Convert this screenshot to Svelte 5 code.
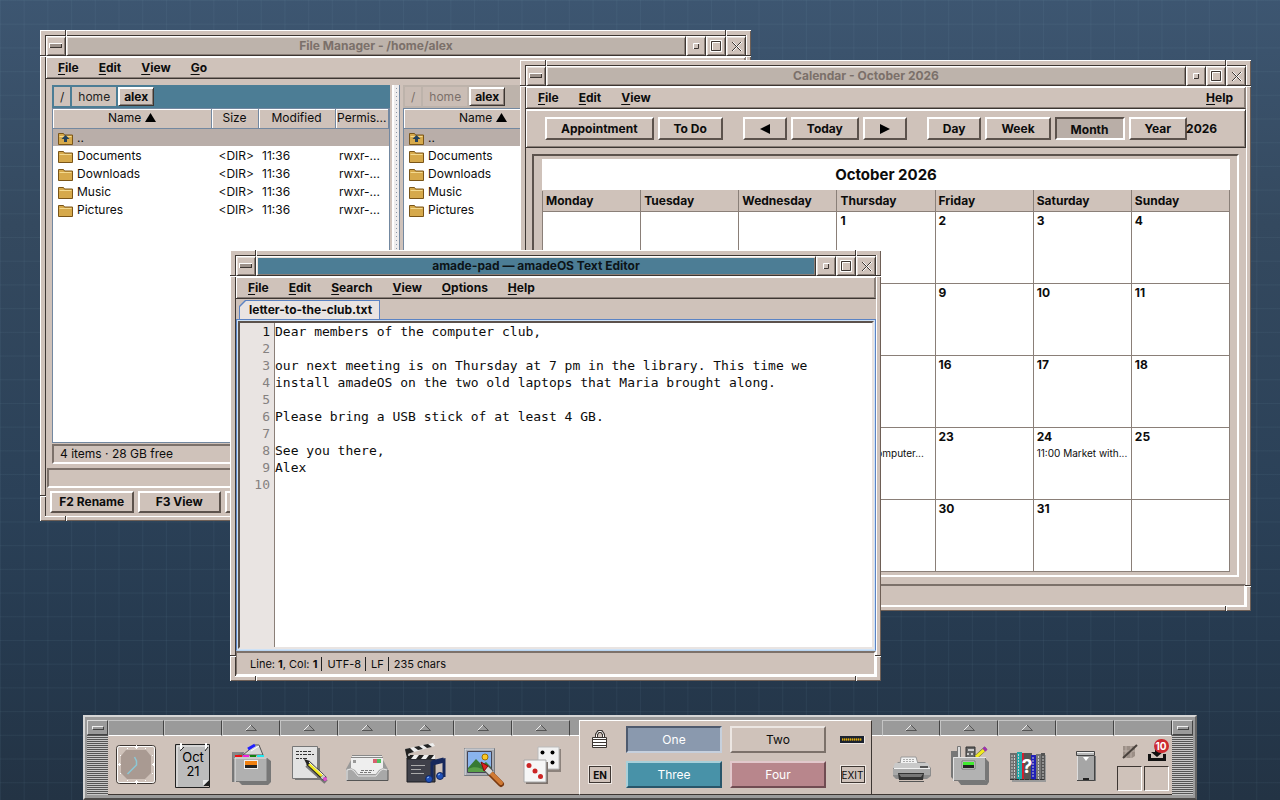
<script>
    const folders = ["Documents", "Downloads", "Music", "Pictures"];
    const fileKeys = ["F2 Rename", "F3 View", "F4 Edit", "F5 Copy", "F6 Move", "F7 Mkdir", "F8 Delete", "F9 Menu"];
    const weekdays = ["Monday", "Tuesday", "Wednesday", "Thursday", "Friday", "Saturday", "Sunday"];
    const events = {
        22: "19:00 Computer...",
        24: "11:00 Market with..."
    };
    const letter = [
        "Dear members of the computer club,",
        "",
        "our next meeting is on Thursday at 7 pm in the library. This time we",
        "install amadeOS on the two old laptops that Maria brought along.",
        "",
        "Please bring a USB stick of at least 4 GB.",
        "",
        "See you there,",
        "Alex",
        ""
    ];
    const leftApps = [
        { name: "clock", menu: false },
        { name: "date", menu: false },
        { name: "files", menu: true },
        { name: "notes", menu: true },
        { name: "mail", menu: true },
        { name: "media", menu: true },
        { name: "paint", menu: true },
        { name: "games", menu: true }
    ];
    const rightApps = [
        { name: "printer", menu: true },
        { name: "tools", menu: true },
        { name: "help", menu: true },
        { name: "trash", menu: false }
    ];

    // October 2026 starts on a Thursday
    const weeks = [0, 1, 2, 3, 4].map((w) =>
        weekdays.map((_, d) => {
            const day = w * 7 + d - 2;
            return day > 0 && day <= 31 ? day : null;
        })
    );

    let workspace = $state("One");
    let calendarView = $state("Month");
</script>

{#snippet titleBar(title)}
    <header class="titlebar">
        <button class="tb" aria-label="Window menu">
            <svg width="16" height="16"><path d="M1 5h13v5H1z" fill="#fff"/><path d="M2 6h12v4H2z" fill="#3d3632"/><path d="M2 6h11v3H2z" fill="#9c918a"/></svg>
        </button>
        <h2>{title}</h2>
        <button class="tb" aria-label="Minimize">
            <svg width="16" height="16"><path d="M5.500 11V5.500h6" fill="none" stroke="#fff"/><path d="M6 10.500h4.500V6" fill="none" stroke="#3d3632"/></svg>
        </button>
        <button class="tb" aria-label="Maximize">
            <svg width="16" height="16" fill="none"><path d="M2.500 13.500V2.500H13.500V13.500z" stroke="#fff"/><path d="M3.500 12.500V3.500H12.500V12.500z" stroke="#3d3632"/><path d="M4.500 12V4.500H12" stroke="#fff"/></svg>
        </button>
        <button class="tb" aria-label="Close">
            <svg width="16" height="16" stroke="#3d3632"><path d="M5 4l9 9M14 4l-9 9" stroke="#fff"/><path d="M4 4l9 9M13 4l-9 9"/></svg>
        </button>
    </header>
{/snippet}

{#snippet menuBar(items, last)}
    <nav class="menubar">
        {#each items as item}
            <button class:last={item === last}><u>{item[0]}</u>{item.slice(1)}</button>
        {/each}
    </nav>
{/snippet}

{#snippet folder(up)}
    <svg class="folder" width="15" height="13">
        <path d="M.5 12.500V1.500h5l1 1.500h8v9.500z" fill="#d6a94b" stroke="#7a5518"/>
        <path d="M1.500 4.500h12" stroke="#f3d98f"/>
        {#if up}<path d="M7.500 3l4 4h-2.500v3h-3V7H3.500z" fill="#23415e"/>{/if}
    </svg>
{/snippet}

{#snippet pane(active)}
    <section class="pane" class:active>
        <div class="path">
            <button>/</button>
            <button>home</button>
            <button class="here">alex</button>
        </div>
        <div class="listing">
            <table>
                <thead>
                    <tr><th class="name">Name <svg width="11" height="9"><path d="M5.500 0L11 9H0z"/></svg></th><th class="size">Size</th><th class="date">Modified</th><th>Permis...</th></tr>
                </thead>
                <tbody>
                    <tr class="selected"><td>{@render folder(true)}..</td><td></td><td></td><td></td></tr>
                    {#each folders as name}
                        <tr><td>{@render folder(false)}{name}</td><td class="dir">&lt;DIR&gt;</td><td>11:36</td><td>rwxr-...</td></tr>
                    {/each}
                </tbody>
            </table>
        </div>
        <p class="sunken">4 items · 28 GB free</p>
    </section>
{/snippet}

{#snippet icon(name)}
    <svg width="48" height="58" viewBox="0 0 48 58">
        {#if name === "clock"}
            <rect x="4.500" y="9.500" width="39" height="38" rx="3" fill="#cfc2ba" stroke="#3d3632"/>
            <rect x="5.500" y="10.500" width="37" height="36" rx="2" fill="none" stroke="#fff"/>
            <path d="M14 14h20l5 6v17l-6 6H15l-6-6V20z" fill="#a99a92"/>
            <path d="M24.500 9v4M24.500 44v4M6 28.500h3M40 28.500h3M23 11.500h3M23 45.500h3M7.500 27v3M41.500 27v3" stroke="#fff"/>
            <path d="M15 12.500h1M33 12.500h1M8 19.500h1M40 19.500h1M8 37.500h1M40 37.500h1M15 44.500h1M33 44.500h1" stroke="#fff"/>
            <path d="M22.500 21l2 4v4l-9 9" fill="none" stroke="#8bc8d6" stroke-width="1.500"/>
        {:else if name === "date"}
            <path d="M7 9h34v35l-6 7H7z" fill="#bcbcbc"/>
            <path d="M6.500 51.500V8.500H40.500V51.500z" fill="none" stroke="#222"/>
            <path d="M8 51V10h32" fill="none" stroke="#eee"/>
            <path d="M34 50l6-6v6z" fill="#222"/><path d="M34 50v-6h6z" fill="#e8e8e8"/>
            <path d="M12 7v6M37 7v6" stroke="#fff" stroke-width="2"/><path d="M11 15l4-4M36 15l3-4" stroke="#222"/>
            <text x="24" y="26">Oct</text>
            <text x="24" y="40">21</text>
        {:else if name === "files"}
            <path d="M5 16h12l-9 30H5zM12 46h28V22l4 3v21l-3 3H15z" fill="#777"/><path d="M5 16h12l-7 3v4H6z" fill="#888"/>
            <path d="M16 19L28 9h4l4 10z" fill="#d6d6d6" stroke="#555"/>
            <path d="M21 13l7-4" stroke="#2020ff" stroke-width="3"/><path d="M24 15l8-5" stroke="#fff"/>
            <path d="M8 21h32v25H8z" fill="#b0b0b0"/><path d="M8 46V22h32" fill="none" stroke="#e5e5e5"/><path d="M9 45.500h31V22" fill="none" stroke="#777"/>
            <path d="M8 20h7" stroke="#f01010" stroke-width="2"/><path d="M16 20h6" stroke="#f020e0" stroke-width="2"/>
            <path d="M23 20h6" stroke="#108010" stroke-width="2"/><path d="M30 20h7" stroke="#20e8f0" stroke-width="2"/>
            <path d="M17 24h14v9H17z" fill="#eee"/><path d="M18 25h12v4H18z" fill="#f08010"/><path d="M18 29h12v3H18z" fill="#222"/>
        {:else if name === "notes"}
            <path d="M10 12h25v32H10z" fill="#777"/><path d="M7.500 10.500h25v32h-25z" fill="#e2e2e2" stroke="#777"/>
            <path d="M11 15.500h16M11 18.500h19M11 22.500h12" stroke="#333" stroke-dasharray="3 1 2 1 4 1"/>
            <path d="M22 29l19 17" stroke="#777" stroke-width="5"/>
            <path d="M23 27l17 16" stroke="#222" stroke-width="5"/><path d="M24 28l13 12" stroke="#f2ea20" stroke-width="3"/>
            <path d="M24 26l14 13" stroke="#fff"/><path d="M19 23l6 2-3 4z" fill="#222"/><path d="M37 40l2 2" stroke="#ccc" stroke-width="4"/><circle cx="40" cy="43" r="2" fill="#e050d0"/>
        {:else if name === "mail"}
            <path d="M3 45V33l5-9h32l5 9v12z" fill="#999"/>
            <path d="M9 19h30v3H9zM8 22h32v16H8z" fill="#eee"/><path d="M9 19.500h30M8 21.500h32" stroke="#888"/>
            <path d="M10 24h3v3h-3z" fill="#999"/><path d="M30 23h4v4h-4z" fill="#d86070"/><path d="M34 23h4v4h-4z" fill="#50c060"/>
            <path d="M18 34.500h13M17 36.500h12" stroke="#777" stroke-dasharray="3 1"/>
            <path d="M3 33l5-1 4 2 4 5h16l4-5 4-2 5 1v12H3z" fill="#a8a8a8"/><path d="M4 44V34l4-1 3 2 4 5h18l4-5 3-2 4 1" fill="none" stroke="#e8e8e8"/>
            <path d="M4 44.500h41V34" fill="none" stroke="#555"/>
        {:else if name === "media"}
            <path d="M6 23h28v23H6z" fill="#3f4049" stroke="#1c1c22"/><path d="M10 29.500h14M10 33.500h10M10 37.500h13" stroke="#aaa"/>
            <path d="M5 19h29v4H5z" fill="#eee"/><path d="M8 19h5l-3 4H5zM18 19h5l-3 4h-5zM28 19h5l-3 4h-5z" fill="#222"/>
            <path d="M4 13L32 7l2 3L6 18z" fill="#eee"/><path d="M4 13l5-1 4 4-7 2zM13 11l5-1 4 3-5 1zM22 9l5-1 4 3-5 1z" fill="#222"/>
            <path d="M4 13l2 10 4-3-3-3z" fill="#222"/><circle cx="8" cy="19" r="1" fill="#ddd"/>
            <path d="M31 43V27l12-3v17" fill="none" stroke="#17285c" stroke-width="3"/><path d="M31 27l12-3" stroke="#17285c" stroke-width="5"/>
            <circle cx="28" cy="43" r="3.500" fill="#1f50b8" stroke="#17285c"/><circle cx="39" cy="40" r="3.500" fill="#1f50b8" stroke="#17285c"/><path d="M26 42l2-1M37 39l2-1" stroke="#9cc4ff"/>
        {:else if name === "paint"}
            <path d="M5.500 12.500h30v27h-30z" fill="#a8abb2" stroke="#777a80"/><path d="M6 39V13h29" fill="none" stroke="#e2e4e8"/>
            <path d="M8.500 15.500h24v21h-24z" fill="#8ab4ee" stroke="#445"/><circle cx="26" cy="21" r="3" fill="#fbc928" stroke="#a07000"/>
            <path d="M9 32l8-9 6 6 4-3 5 5v5H9z" fill="#367a34"/><path d="M9 33c6-3 13-2 18 3H9z" fill="#59a048"/>
            <path d="M31 37l11 11" stroke="#7a3a12" stroke-width="6" stroke-linecap="round"/><path d="M32 37l10 10" stroke="#d07a35" stroke-width="4" stroke-linecap="round"/>
            <path d="M27 32l5 5" stroke="#555" stroke-width="7"/><path d="M27 32l5 5" stroke="#d8d8d8" stroke-width="5"/>
            <path d="M22 26l7 4-4 5z" fill="#e02020" stroke="#7a1010"/>
        {:else if name === "games"}
            <path d="M22 13h22v23H22z" fill="#8c827c"/><path d="M21 11h21v22H21z" fill="#f2f2f2" stroke="#bbb"/>
            <circle cx="25.500" cy="16.500" r="2"/><circle cx="35.500" cy="16.500" r="2"/><circle cx="35.500" cy="26.500" r="2"/>
            <path d="M9 26h22v22H9z" fill="#7c726c"/><path d="M7 24h22v22H7z" fill="#f6f6f6" stroke="#aaa"/>
            <g fill="#cc2525"><circle cx="12" cy="29.500" r="2.500"/><circle cx="18" cy="35" r="2.500"/><circle cx="23.500" cy="40.500" r="2.500"/></g>
        {:else if name === "printer"}
            <path d="M6 32l5-6h27l6 6v8l-4 3H9l-3-3z" fill="#8c8c8c"/>
            <path d="M14 21h15l2 7H13z" fill="#f2f2f2" stroke="#999"/><path d="M16 23.500h11M16 25.500h12" stroke="#aaa" stroke-dasharray="2 1"/>
            <path d="M8 27h33l2 5H6z" fill="#c9c9c9"/><path d="M7 32.500h36" stroke="#f2f2f2"/><path d="M33 30h8v2h-8z" fill="#555"/>
            <path d="M6 33h37v6H6z" fill="#a8a8a8"/><path d="M11 37h26l-1 7H12z" fill="#333"/><path d="M12 38h24l-2 3H14z" fill="#777"/><path d="M12 45.500h25" stroke="#555"/>
        {:else if name === "tools"}
            <path d="M6 15h9v28H8l-2-2z" fill="#777"/><path d="M13 45h28V23l3 3v20l-2 3H16z" fill="#777"/>
            <path d="M12.500 10.500h3v12h-3z" fill="#ddd" stroke="#777"/><path d="M21 11h9v11h-9z" fill="#666" stroke="#333"/><path d="M23 13h6v2h-6zM22 17h2v2h-2zM26 17h2v2h-2z" fill="#ccc"/>
            <path d="M31 21l10-9" stroke="#555" stroke-width="4"/><path d="M31 21l8-7" stroke="#f2ea20" stroke-width="3"/><path d="M39 14l2-2" stroke="#a030b0" stroke-width="4"/>
            <path d="M8 21h33v24H8z" fill="#b2b2b2"/><path d="M8.500 45V21.500H41" fill="none" stroke="#e4e4e4"/><path d="M9 44.500h31.500V22" fill="none" stroke="#777"/>
            <path d="M17 25h13v8H17z" fill="#eee" stroke="#777"/><path d="M18 26h11v3H18z" fill="#40ea30"/><path d="M18 29h11v3H18z" fill="#222"/>
        {:else if name === "help"}
            <path d="M9 19h34v27H9z" fill="#999"/><path d="M7 17h7v27H7z" fill="#6e6e6e"/><path d="M14 16h5v28h-5z" fill="#20a8a8"/><path d="M19 17h3v27h-3z" fill="#d02030"/>
            <path d="M21 17h8v27h-8z" fill="#555"/><path d="M28 19h5v25h-5z" fill="#2020b8"/><path d="M33 18h5v26h-5z" fill="#777"/><path d="M38 17h4v27h-4z" fill="#555"/>
            <path d="M9 19v23M11.500 19v23M15.500 18v23M35.500 20v23M40 20v23M30 21v21" stroke="#ccc" stroke-dasharray="2 1"/>
            <path d="M7 43.500h34" stroke="#333" stroke-dasharray="4 1"/>
            <text class="ask" x="24" y="37">?</text>
        {:else if name === "trash"}
            <path d="M16 20h19v25H16z" fill="#7c7c7c"/><path d="M16 19h17v25H16z" fill="#a6a6a6"/><path d="M16.500 44V19h17" fill="none" stroke="#ddd"/>
            <path d="M15.500 15.500h18v4h-18z" fill="#b8b8b8" stroke="#444"/><path d="M16 16.500h17" stroke="#eee"/><path d="M22 21h6l-3 4z" fill="#fff"/>
            <path d="M33.500 20v24.500H16" fill="none" stroke="#444"/><path d="M22 42h6v2h-6z" fill="#222"/>
        {/if}
    </svg>
{/snippet}

{#snippet slot(app)}
    <div class="slot">
        <button class="tab" aria-label="{app.name} menu">
            {#if app.menu}
                <svg width="12" height="8" fill="none"><path d="M.5 6.500h11L6 1" stroke="#555"/><path d="M.5 6.500L6 1" stroke="#eee"/></svg>
            {/if}
        </button>
        <button class="app" aria-label={app.name}>{@render icon(app.name)}</button>
    </div>
{/snippet}

<div class="desktop">
    <article class="window files">
        {@render titleBar("File Manager - /home/alex")}
        {@render menuBar(["File", "Edit", "View", "Go"])}
        <div class="panes">
            {@render pane(true)}
            <div class="splitter"></div>
            {@render pane(false)}
        </div>
        <div class="sunken prompt"></div>
        <footer class="keys">
            {#each fileKeys as key}
                <button class="push">{key}</button>
            {/each}
        </footer>
    </article>

    <article class="window calendar">
        {@render titleBar("Calendar - October 2026")}
        {@render menuBar(["File", "Edit", "View", "Help"], "Help")}
        <div class="toolbar">
            <div class="group">
                <button class="push">Appointment</button>
                <button class="push">To Do</button>
            </div>
            <div class="group">
                <button class="push" aria-label="Previous"><svg width="10" height="10"><path d="M10 0v10L0 5z"/></svg></button>
                <button class="push">Today</button>
                <button class="push" aria-label="Next"><svg width="10" height="10"><path d="M0 0v10l10-5z"/></svg></button>
            </div>
            <div class="group">
                {#each ["Day", "Week", "Month", "Year"] as view}
                    <button class="push" class:pressed={calendarView === view} onclick={() => (calendarView = view)}>{view}</button>
                {/each}
            </div>
            <strong>2026</strong>
        </div>
        <div class="month">
            <h3>October 2026</h3>
            <table>
                <thead>
                    <tr>{#each weekdays as day}<th>{day}</th>{/each}</tr>
                </thead>
                <tbody>
                    {#each weeks as week}
                        <tr>
                            {#each week as day}
                                <td>
                                    <b>{day ?? ""}</b>
                                    {#if events[day]}<p>{events[day]}</p>{/if}
                                </td>
                            {/each}
                        </tr>
                    {/each}
                </tbody>
            </table>
        </div>
        <div class="sunken status"></div>
    </article>

    <article class="window editor focused">
        {@render titleBar("amade-pad — amadeOS Text Editor")}
        {@render menuBar(["File", "Edit", "Search", "View", "Options", "Help"])}
        <div class="tabs">
            <button><span>letter-to-the-club.txt</span></button>
        </div>
        <div class="text">
            <ol>
                {#each letter as line, i}
                    <li><i class:current={i === 0}>{i + 1}</i><span>{line}</span></li>
                {/each}
            </ol>
        </div>
        <footer class="sunken status"><span>Line: <b>1</b>, Col: <b>1</b></span><span>UTF-8</span><span>LF</span><span>235 chars</span></footer>
    </article>

    <footer class="panel">
        <div class="handle"><button aria-label="Panel menu"><i></i></button></div>
        <div class="apps left">
            {#each leftApps as app}
                {@render slot(app)}
            {/each}
        </div>
        <div class="filler"></div>
        <div class="center">
            <div class="side">
                <button aria-label="Lock">
                    <svg width="16" height="19" fill="none">
                        <path d="M4.500 8V4.500l2-3h3l2 3V8" stroke="#3d3632" stroke-width="3"/><path d="M4.500 8V4.500l2-3h3l2 3V8" stroke="#fff"/>
                        <path d="M.5 7.500h14v10H.5z" fill="#fff" stroke="#3d3632"/><path d="M1 9.500h13M1 12.500h13M1 15.500h13" stroke="#3d3632"/>
                    </svg>
                </button>
                <button class="box bold">EN</button>
            </div>
            <div class="workspaces">
                {#each ["One", "Two", "Three", "Four"] as ws}
                    <button class={ws.toLowerCase()} class:on={workspace === ws} onclick={() => (workspace = ws)}>{ws}</button>
                {/each}
            </div>
            <div class="side">
                <button aria-label="Activity">
                    <svg width="25" height="8"><path d="M0 0h25v8H0z" fill="#efe8e3"/><path d="M0 0h24v7H0z" fill="#1b2230"/><path d="M2 3.500h20" stroke="#ffc400" stroke-width="2" stroke-dasharray="1 1"/><path d="M2 3.500h20" stroke="#c89a10" stroke-opacity=".5" stroke-width="2"/></svg>
                </button>
                <button class="box">EXIT</button>
            </div>
        </div>
        <div class="filler end"></div>
        <div class="apps">
            {#each rightApps as app}
                {@render slot(app)}
            {/each}
            <div class="slot">
                <div class="tab"></div>
                <div class="tray">
                    <svg width="16" height="16"><path d="M1 2h12v10l-3 2H1z" fill="#9c8f87"/><path d="M4 2v12M9 2v12M1 7h12" stroke="#bdb0a8"/><path d="M1 14L15 1" stroke="#4a423d" stroke-width="2"/></svg>
                    <button class="inbox" aria-label="Inbox">
                        <svg width="18" height="14"><path d="M1.500 7v5.500h15V7" fill="none" stroke="#111" stroke-width="3"/><path d="M7 0h4v5h4l-6 5-6-5h4z" fill="#111"/></svg>
                        <span class="badge">10</span>
                    </button>
                    <div class="well"></div>
                    <div class="well"></div>
                </div>
            </div>
        </div>
        <div class="handle"><button aria-label="Panel menu"><i></i></button></div>
    </footer>
</div>

<style>
    :global(body) {
        margin: 0;
    }
    .desktop {
        --tan: #cfc2ba;
        --dark: #3d3632;
        --mid: #8a7f78;
        position: relative;
        display: flex;
        flex-direction: column;
        justify-content: flex-end;
        align-items: center;
        height: 100vh;
        overflow: hidden;
        font: 12px/16px Inter, "Liberation Sans", sans-serif;
        color: #0c0c0c;
        background-image:
            linear-gradient(90deg, rgba(130, 170, 190, .08) 1px, transparent 1px),
            linear-gradient(rgba(130, 170, 190, .08) 1px, transparent 1px),
            linear-gradient(#3d5671, #34495f 28%, #2b4158 62%, #263a4f 80%, #233344);
        background-size: calc(100vw / 54) calc(100vw / 54), calc(100vw / 54) calc(100vw / 54), auto;
    }
    button {
        margin: 0;
        padding: 0;
        border: 0;
        background: none;
        font: inherit;
        color: inherit;
    }
    h2, h3, p, ol {
        margin: 0;
        padding: 0;
    }
    svg {
        display: block;
    }

    /* window frame */
    .window {
        position: absolute;
        display: flex;
        flex-direction: column;
        box-sizing: border-box;
        padding: 5px;
        background: var(--tan);
        box-shadow: inset 1px 1px #fff, inset -1px -1px #6e5f56;
    }
    /* inner edge of the frame and the cuts that mark the resize corners */
    .window::before {
        content: "";
        position: absolute;
        inset: 0;
        pointer-events: none;
        --v: linear-gradient(90deg, var(--dark) 1px, #fff 1px);
        --h: linear-gradient(var(--dark) 1px, #fff 1px);
        background:
            var(--v) left 25px top 0 / 2px 6px no-repeat,
            var(--v) right 24px top 0 / 2px 6px no-repeat,
            var(--v) left 25px bottom 0 / 2px 5px no-repeat,
            var(--v) right 24px bottom 0 / 2px 5px no-repeat,
            var(--h) left 0 top 25px / 6px 2px no-repeat,
            var(--h) right 0 top 25px / 6px 2px no-repeat,
            var(--h) left 0 bottom 24px / 6px 2px no-repeat,
            var(--h) right 0 bottom 24px / 6px 2px no-repeat,
            linear-gradient(var(--dark), var(--dark)) left 5px top 5px / 1px calc(100% - 10px) no-repeat,
            linear-gradient(#fff, #fff) right 4px top 5px / 1px calc(100% - 9px) no-repeat,
            linear-gradient(#fff, #fff) left 5px bottom 4px / calc(100% - 9px) 1px no-repeat;
    }
    .files {
        left: 40px;
        top: 30px;
        width: 711px;
        height: 491px;
    }
    .calendar {
        left: 520px;
        top: 60px;
        width: 731px;
        height: 551px;
    }
    .editor {
        left: 230px;
        top: 250px;
        width: 651px;
        height: 431px;
    }
    .titlebar {
        display: flex;
        flex: none;
        height: 20px;
        border-top: 1px solid var(--dark);
        border-left: 1px solid var(--dark);
    }
    .tb, h2 {
        box-sizing: border-box;
        border: 1px solid;
        border-color: #fff var(--dark) var(--dark) #fff;
        box-shadow: inset 1px 1px #e8e0da, inset -1px -1px var(--mid);
    }
    .tb {
        display: grid;
        place-items: center;
        width: 20px;
    }
    h2 {
        flex: 1;
        font: bold 12px/18px Inter, sans-serif;
        text-align: center;
        color: #7b706a;
        background: #bdb3ab;
    }
    .focused h2 {
        color: #0c1418;
        background: #4c7d95;
    }
    .menubar {
        display: flex;
        flex: none;
        gap: 20px;
        height: 23px;
        box-sizing: border-box;
        padding: 0 12px;
        font-weight: bold;
        border: 1px solid;
        border-color: #fff var(--mid) var(--dark) var(--dark);
        box-shadow: inset 1px 1px #fff, inset -1px -1px var(--mid);
    }
    .menubar u {
        text-underline-offset: 2px;
    }
    .last {
        margin-left: auto;
    }
    .push {
        box-sizing: border-box;
        height: 23px;
        font-weight: bold;
        border: 2px solid;
        border-color: #fff #5c524c #5c524c #fff;
    }
    .push svg {
        margin: auto;
    }
    .pressed {
        background: #b9aea7;
        border-color: #5c524c #fff #fff #5c524c;
    }
    .sunken {
        box-sizing: border-box;
        border: 2px solid;
        border-color: #7c716a #fff #fff #7c716a;
    }

    /* file manager */
    .panes {
        display: flex;
        flex: 1;
        padding: 6px 5px 4px 7px;
    }
    .pane {
        display: flex;
        flex: 1;
        flex-direction: column;
        min-width: 0;
    }
    .path {
        display: flex;
        gap: 2px;
        height: 23px;
        box-sizing: border-box;
        padding: 2px;
        background: #bdb3ab;
        color: #7b706a;
    }
    .path button {
        padding: 0 6px;
        background: #cabdb5;
    }
    .path .here {
        padding: 0 5px;
        font-weight: bold;
        color: #0c0c0c;
        background: var(--tan);
        border: 1px solid;
        border-color: #fff var(--dark) var(--dark) #fff;
        box-shadow: inset 1px 1px #fff, inset -1px -1px var(--mid);
    }
    .active .path {
        background: #4c7d95;
        color: #222;
    }
    .active .path button {
        background: var(--tan);
    }
    .listing {
        flex: 1;
        background: #fff;
        border: 1px solid #7388a0;
    }
    .listing table {
        width: 100%;
        table-layout: fixed;
        border-collapse: collapse;
    }
    .listing th {
        height: 19px;
        padding: 0;
        box-sizing: border-box;
        font-weight: normal;
        background: var(--tan);
        border-right: 1px solid #7388a0;
        border-bottom: 1px solid #7388a0;
        box-shadow: inset 1px 1px #fff;
        white-space: nowrap;
    }
    th svg {
        display: inline-block;
    }
    .name {
        width: 158px;
    }
    .size {
        width: 47px;
    }
    .date {
        width: 77px;
    }
    .listing td {
        height: 18px;
        padding: 1px 4px 0;
        box-sizing: border-box;
        white-space: nowrap;
    }
    .listing td:first-child {
        padding-left: 5px;
    }
    .dir {
        text-align: right;
    }
    .selected {
        background: #b9aea9;
    }
    .folder {
        display: inline-block;
        vertical-align: -3px;
        margin-right: 4px;
    }
    .pane p {
        height: 20px;
        margin-top: 1px;
        padding-left: 6px;
    }
    .splitter {
        width: 8px;
        margin: 0 3px 0 2px;
        border-left: 2px solid #fff;
        border-right: 1px solid #7388a0;
        box-sizing: border-box;
        background:
            repeating-linear-gradient(#eeecec 0 3px, transparent 3px 4px),
            repeating-linear-gradient(90deg, #eeecec 0 2px, #8a96a6 2px 3px, #eeecec 3px 5px);
    }
    .prompt {
        flex: none;
        height: 20px;
        margin: 0 0 3px 2px;
    }
    .keys {
        display: flex;
        gap: 4px;
        padding: 0 0 3px 5px;
    }
    .keys .push {
        flex: 1;
        height: 22px;
    }

    /* calendar */
    .toolbar {
        display: flex;
        flex: none;
        align-items: center;
        height: 39px;
        box-sizing: border-box;
        padding-left: 19px;
        border: 1px solid var(--dark);
        border-top-color: #fff;
        box-shadow: inset 1px 1px #fff, inset -1px -1px var(--mid);
    }
    .group {
        display: flex;
        gap: 4px;
        margin-right: 20px;
    }
    .group .push {
        padding: 0 14px;
    }
    .group .push:has(svg) {
        padding: 0 15px;
    }
    .toolbar .group:nth-child(3) {
        margin-right: -1px;
    }
    .toolbar .pressed {
        padding-top: 2px;
    }
    .month {
        display: flex;
        flex: 1;
        flex-direction: column;
        margin: 6px 7px 7px;
        padding: 3px 7px 3px 8px;
        border: 2px solid;
        border-color: #5c524c #fff #fff #5c524c;
    }
    h3 {
        font: bold 15px/31px Inter, sans-serif;
        text-align: center;
        background: #fff;
    }
    .month table {
        width: 100%;
        table-layout: fixed;
        border-collapse: collapse;
        background: #fff;
    }
    .month th, .month td {
        padding: 0 3px;
        text-align: left;
        border: 1px solid #8a7f78;
    }
    .month th {
        height: 20px;
        background: var(--tan);
        border-top-color: var(--tan);
    }
    .month td {
        height: 72px;
        box-sizing: border-box;
        padding-top: 1px;
        vertical-align: top;
    }
    .month td p {
        font-size: 10px;
        white-space: nowrap;
    }
    .calendar .status {
        height: 23px;
        flex: none;
    }

    /* editor */
    .tabs {
        display: flex;
        flex: none;
        align-items: flex-end;
        height: 21px;
        padding-left: 4px;
        border-bottom: 1px solid #5b83c4;
        box-sizing: border-box;
    }
    .tabs button {
        height: 19px;
        padding: 1px 1px 0;
        background: #5b83c4;
        clip-path: polygon(0 6px, 6px 0, 100% 0, 100% 100%, 0 100%);
    }
    .tabs span {
        display: block;
        height: 18px;
        padding: 0 7px 0 9px;
        font-weight: bold;
        line-height: 18px;
        background: #e9e4e2;
        clip-path: polygon(0 6px, 6px 0, 100% 0, 100% 100%, 0 100%);
    }
    .text {
        flex: 1;
        margin-left: 1px;
        border: 1px solid #5b83c4;
        border-top: 0;
        border-bottom-color: #b8d4f0;
        padding: 1px;
        background: #cfe2f6;
    }
    ol {
        box-sizing: border-box;
        height: 100%;
        list-style: none;
        font: 13px/17px "DejaVu Sans Mono", monospace;
        border: 2px solid;
        border-color: #5c524c #e9e4e2 #e9e4e2 #5c524c;
        background: linear-gradient(90deg, #e9e4e2 34px, #8a7f78 34px, #8a7f78 35px, #fff 35px);
    }
    li {
        display: flex;
        gap: 5px;
        height: 17px;
        white-space: pre;
    }
    li i {
        width: 30px;
        font-style: normal;
        text-align: right;
        color: #858180;
    }
    li .current {
        color: #111;
    }
    .editor .status {
        display: flex;
        flex: none;
        height: 25px;
        padding: 4px 13px;
        line-height: 14px;
        font-size: 11px;
    }
    .editor .status span {
        height: 14px;
    }
    .editor .status span + span {
        margin-left: 4px;
        padding-left: 5px;
        border-left: 1px solid #222;
    }

    /* front panel */
    .panel {
        display: flex;
        height: 85px;
        box-sizing: border-box;
        border: 2px solid;
        border-color: #d6d6d6 #666 #4c4a49 #d6d6d6;
        padding: 3px 2px;
        background: #9a9a9a;
    }
    .handle {
        display: flex;
        flex-direction: column;
        width: 21px;
        background: repeating-linear-gradient(#c8c8c8 0 1px, #555 1px 2px);
    }
    .handle button {
        display: grid;
        place-items: center;
        height: 15px;
        background: #9a9a9a;
        border: 1px solid;
        border-color: #ddd #444 #444 #ddd;
        box-sizing: border-box;
    }
    .handle i {
        width: 10px;
        height: 2px;
        border: 1px solid;
        border-color: #eee #444 #444 #eee;
    }
    .apps {
        display: flex;
    }
    .slot {
        display: flex;
        flex-direction: column;
        width: 58px;
        background: var(--tan);
        border-bottom: 1px solid var(--dark);
    }
    .left .slot:first-child {
        width: 56px;
    }
    .tab {
        display: grid;
        place-items: center;
        height: 16px;
        box-sizing: border-box;
        background: #9a9a9a;
        border: 1px solid;
        border-color: #c4c4c4 #444 #fff #c4c4c4;
    }
    .app {
        display: grid;
        place-items: center;
        flex: 1;
    }
    .app text {
        font: 13px Inter, sans-serif;
        text-anchor: middle;
    }
    .app .ask {
        font: bold 19px Inter, sans-serif;
        fill: #fff;
    }
    .filler {
        width: 9px;
        background: linear-gradient(#9a9a9a 15px, #fff 15px, #fff 16px, #cfc2ba 16px);
        border-bottom: 1px solid var(--dark);
    }
    .end {
        width: 10px;
    }
    .center {
        display: flex;
        align-items: flex-start;
        gap: 14px;
        padding: 5px 7px 0 8px;
        background: var(--tan);
        border: 1px solid;
        border-color: #fff var(--dark) var(--dark) #fff;
    }
    .side {
        display: grid;
        place-items: center;
        grid-template-rows: 27px 27px;
        gap: 8px;
        width: 24px;
    }
    .box {
        width: 24px;
        height: 17px;
        box-sizing: border-box;
        border: 1px solid var(--dark);
        outline: 1px solid #efe8e3;
        line-height: 14px;
        font-size: 10px;
    }
    .bold {
        width: 22px;
        font-weight: bold;
    }
    .workspaces {
        display: grid;
        grid-template-columns: 96px 96px;
        grid-auto-rows: 27px;
        gap: 8px;
    }
    .workspaces button {
        border: 2px solid;
        color: #fff;
    }
    .workspaces .one {
        background: #8a99ae;
        border-color: #c6d0dd #4e5a6e #4e5a6e #c6d0dd;
    }
    .workspaces .one.on {
        border-color: #4e5a6e #c6d0dd #c6d0dd #4e5a6e;
    }
    .workspaces .two {
        color: #0c0c0c;
        background: var(--tan);
        border-color: #ece6e2 #7c716a #7c716a #ece6e2;
    }
    .workspaces .three {
        background: #4892a8;
        border-color: #a8d0da #28566a #28566a #a8d0da;
    }
    .workspaces .four {
        background: #b8868c;
        border-color: #e2c8cc #704c52 #704c52 #e2c8cc;
    }
    .tray {
        display: grid;
        grid-template-columns: 25px 25px;
        grid-template-rows: 22px 25px;
        gap: 3px 2px;
        flex: 1;
        padding: 5px 3px 0;
        place-items: center;
        place-content: start center;
    }
    .inbox {
        position: relative;
        padding-top: 4px;
    }
    .badge {
        position: absolute;
        left: 6px;
        top: -4px;
        width: 15px;
        height: 14px;
        border-radius: 7px;
        font: bold 10px/14px Inter, sans-serif;
        color: #fff;
        background: #cc2a30;
    }
    .well {
        width: 100%;
        height: 100%;
        box-sizing: border-box;
        border: 1px solid;
        border-color: var(--dark) #fff #fff var(--dark);
    }
</style>
